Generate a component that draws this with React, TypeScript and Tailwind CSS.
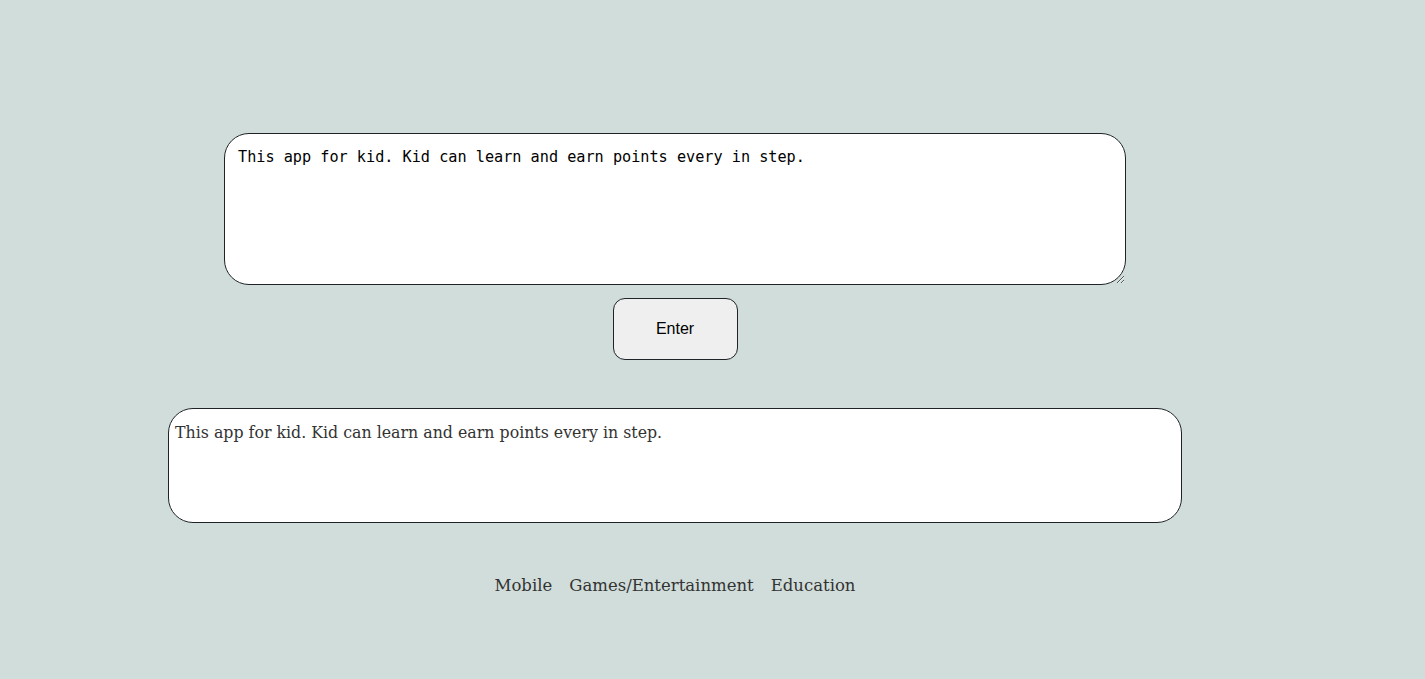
import React, { useState } from 'react';

const text = 'This app for kid. Kid can learn and earn points every in step.';

export default function App() {
  const [value, setValue] = useState(text);
  const [output, setOutput] = useState(text);

  return (
    <div className="min-h-[679px] w-full bg-[#d1ddda]">
      <div className="flex w-[1350px] flex-col items-center pt-[133px]">
        <textarea
          value={value}
          onChange={(e) => setValue(e.target.value)}
          className="box-border h-[152px] w-[902px] rounded-[25px] border border-[#1f2328] bg-white px-[13px] pt-[14px] pb-[12px] font-['DejaVu_Sans_Mono','Liberation_Mono',monospace] text-[15.2px] leading-[18px] text-black outline-none"
        />
        <button
          onClick={() => setOutput(value)}
          className="mt-[13px] h-[62px] w-[125px] rounded-[12px] border border-[#1f2328] bg-[#efefef] font-['Liberation_Sans',Arial,sans-serif] text-[16px] text-black"
        >
          Enter
        </button>
        <div className="mt-[48px] box-border h-[115px] w-[1014px] rounded-[25px] border border-[#1f2328] bg-white px-[6px] pt-[13px] font-['DejaVu_Serif','Liberation_Serif',serif] text-[15.8px] leading-[22px] text-[#333]">
          {output}
        </div>
        <div className="mt-[51px] flex gap-[17px] font-['DejaVu_Serif','Liberation_Serif',serif] text-[16.5px] text-[#333]">
          <span>Mobile</span>
          <span>Games/Entertainment</span>
          <span>Education</span>
        </div>
      </div>
    </div>
  );
}
